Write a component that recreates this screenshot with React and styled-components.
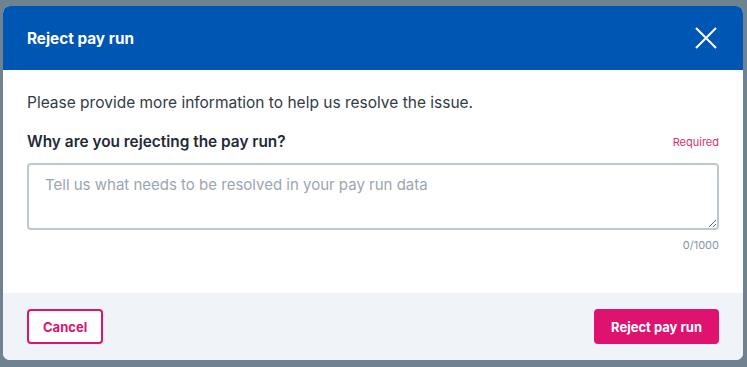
import React from 'react';
import styled, { createGlobalStyle } from 'styled-components';

const Global = createGlobalStyle`
	html, body {
		margin: 0;
		padding: 0;
		background: #6f8290;
		font-family: Inter, "Open Sans", "Liberation Sans", sans-serif;
	}
`;

const Backdrop = styled.div`
	width: 747px;
	height: 367px;
	padding: 6px 4px 7px 3px;
	box-sizing: border-box;
	display: flex;
`;

const Modal = styled.div`
	flex: 1;
	display: flex;
	flex-direction: column;
	background: #fff;
	border-radius: 7px;
	overflow: hidden;
`;

const Header = styled.div`
	height: 64px;
	background: #0056b3;
	display: flex;
	align-items: center;
	justify-content: space-between;
	padding: 0 26px 0 24px;
	color: #fff;
`;

const Title = styled.h2`
	margin: 0;
	font-size: 15.3px;
	font-weight: 700;
`;

const Close = styled.button`
	background: none;
	border: none;
	padding: 0;
	width: 22px;
	height: 22px;
	display: flex;
	cursor: pointer;
`;

const Body = styled.div`
	flex: 1;
	padding: 23px 24px 0 24px;
	display: flex;
	flex-direction: column;
`;

const Intro = styled.p`
	margin: 0 0 19px;
	font-size: 15.5px;
	line-height: 20px;
	color: #333b44;
`;

const LabelRow = styled.div`
	display: flex;
	justify-content: space-between;
	align-items: center;
	margin-bottom: 11px;
`;

const Label = styled.label`
	font-size: 15.4px;
	font-weight: 600;
	line-height: 20px;
	color: #1f2b37;
`;

const Required = styled.span`
	font-size: 11px;
	color: #d6336c;
`;

const TextArea = styled.textarea`
	height: 67px;
	box-sizing: border-box;
	border: 2px solid #bcc8d4;
	border-radius: 4px;
	padding: 10px 16px;
	font-family: inherit;
	font-size: 15px;
	color: #333;
	resize: vertical;
	&::placeholder {
		color: #9ba6b2;
	}
`;

const Counter = styled.div`
	text-align: right;
	font-size: 11px;
	color: #8793a0;
	margin-top: 8px;
`;

const Footer = styled.div`
	height: 67px;
	background: #f0f4f8;
	display: flex;
	align-items: center;
	justify-content: space-between;
	padding: 0 24px;
`;

const Button = styled.button`
	height: 35px;
	padding: 0 ${props => props.primary ? '15px' : '14px'};
	border-radius: 4px;
	font-family: inherit;
	font-size: 13px;
	font-weight: 700;
	cursor: pointer;
	border: 2px solid #e0126f;
	background: ${props => props.primary ? '#e0126f' : '#fff'};
	color: ${props => props.primary ? '#fff' : '#e0126f'};
`;

export default function App() {
	return (
		<Backdrop>
			<Global />
			<Modal>
				<Header>
					<Title>Reject pay run</Title>
					<Close aria-label='Close'>
						<svg width='22' height='22' viewBox='0 0 22 22'>
							<path d='M1 1L21 21M21 1L1 21' stroke='#fff' strokeWidth='2' />
						</svg>
					</Close>
				</Header>
				<Body>
					<Intro>Please provide more information to help us resolve the issue.</Intro>
					<LabelRow>
						<Label>Why are you rejecting the pay run?</Label>
						<Required>Required</Required>
					</LabelRow>
					<TextArea placeholder='Tell us what needs to be resolved in your pay run data' />
					<Counter>0/1000</Counter>
				</Body>
				<Footer>
					<Button>Cancel</Button>
					<Button primary>Reject pay run</Button>
				</Footer>
			</Modal>
		</Backdrop>
	);
}
